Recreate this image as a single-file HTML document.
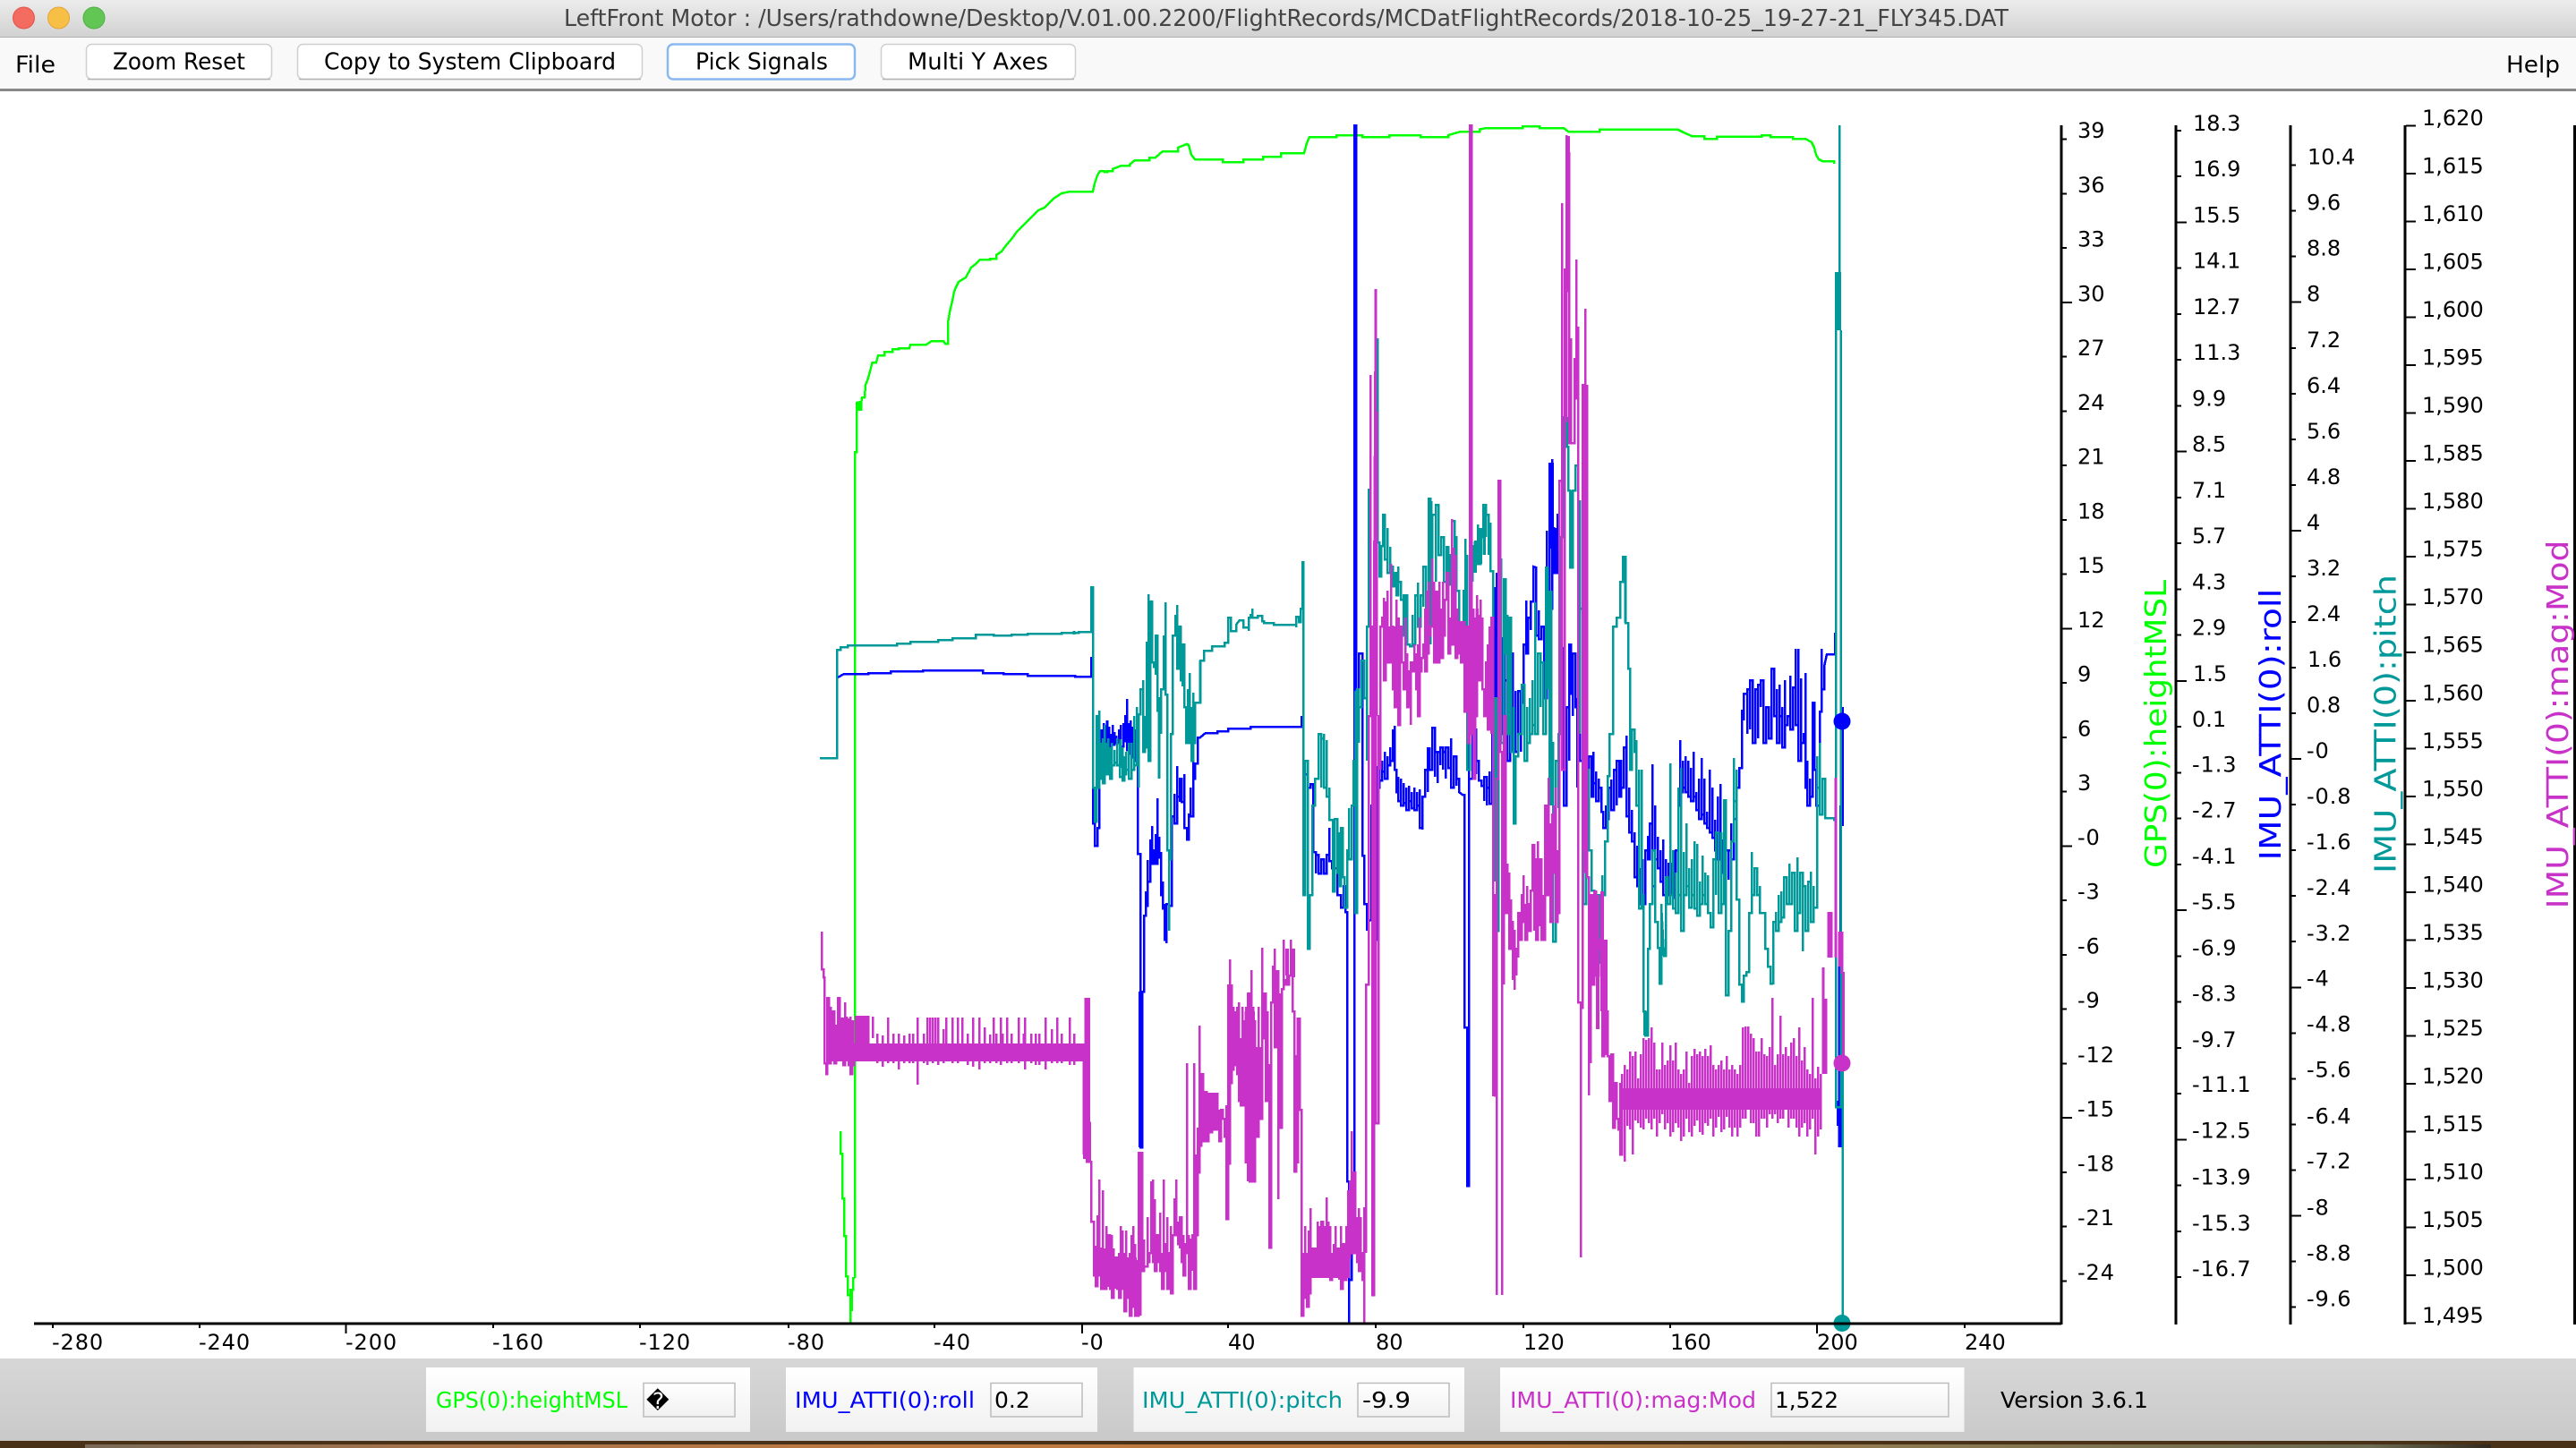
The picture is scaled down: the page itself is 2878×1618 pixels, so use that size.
<!DOCTYPE html>
<html><head><meta charset="utf-8"><title>LeftFront Motor</title>
<style>
html,body{margin:0;padding:0;background:#fff;width:2878px;height:1618px;overflow:hidden}
svg{display:block}
text{font-family:"DejaVu Sans","Liberation Sans",sans-serif}
.t{font-size:24px;fill:#000}
.n{letter-spacing:.9px}
.u{font-size:26px;fill:#000}
.p{font-size:25px}
.tr{fill:none;stroke-linejoin:miter;shape-rendering:crispEdges}
.ax{fill:none;stroke:#000;shape-rendering:crispEdges}
</style></head><body>
<svg width="2878" height="1618" viewBox="0 0 2878 1618" xmlns="http://www.w3.org/2000/svg">
<defs>
<linearGradient id="tb" x1="0" y1="0" x2="0" y2="1"><stop offset="0" stop-color="#ececec"/><stop offset="1" stop-color="#d2d2d2"/></linearGradient>
<linearGradient id="bp" x1="0" y1="0" x2="0" y2="1"><stop offset="0" stop-color="#d7d7d7"/><stop offset="1" stop-color="#c9c9c9"/></linearGradient>
<linearGradient id="wb" x1="0" y1="0" x2="0" y2="1"><stop offset="0" stop-color="#ffffff"/><stop offset="1" stop-color="#f1f1f1"/></linearGradient>
<linearGradient id="wp" x1="0" y1="0" x2="1" y2="0"><stop offset="0" stop-color="#7a6a58"/><stop offset=".15" stop-color="#a9744a"/><stop offset=".35" stop-color="#c07a40"/><stop offset=".6" stop-color="#b87a3e"/><stop offset=".75" stop-color="#8f7a50"/><stop offset=".95" stop-color="#6c6a50"/><stop offset="1" stop-color="#33291c"/></linearGradient>
</defs>
<rect width="2878" height="1618" fill="#fff"/>

<!-- title bar -->
<rect width="2878" height="41" fill="url(#tb)"/>
<rect y="41" width="2878" height="1" fill="#b0b0b0"/>
<circle cx="26.5" cy="20" r="12" fill="#f46b5f" stroke="#e2554a"/>
<circle cx="65.5" cy="20" r="12" fill="#f8bf47" stroke="#e2a533"/>
<circle cx="105" cy="20" r="12" fill="#61c654" stroke="#4fb043"/>
<text x="630" y="29" font-size="26" fill="#444" textLength="1614" lengthAdjust="spacingAndGlyphs">LeftFront Motor : /Users/rathdowne/Desktop/V.01.00.2200/FlightRecords/MCDatFlightRecords/2018-10-25_19-27-21_FLY345.DAT</text>

<!-- tool bar -->
<rect y="42" width="2878" height="57" fill="#f9f9f9"/>
<rect y="99" width="2878" height="3" fill="#888"/>
<text class="u" x="17" y="81" textLength="45" lengthAdjust="spacingAndGlyphs">File</text>
<text class="u" x="2800" y="81" textLength="60" lengthAdjust="spacingAndGlyphs">Help</text>
<g fill="#fff" stroke="#d0d0d0" stroke-width="1.5">
<rect x="96.5" y="49.5" width="207" height="39" rx="6"/>
<rect x="332.5" y="49.5" width="385" height="39" rx="6"/>
<rect x="984.5" y="49.5" width="217" height="39" rx="6"/>
</g>
<g fill="none" stroke="#b4b4b4" stroke-width="1.5">
<path d="M98 88.5H302M334 88.5H716M986 88.5H1200"/>
</g>
<rect x="746" y="49.5" width="209" height="39" rx="6" fill="#fff" stroke="#8ab9f2" stroke-width="2.5"/>
<text class="u" x="126" y="77.5" textLength="148" lengthAdjust="spacingAndGlyphs">Zoom Reset</text>
<text class="u" x="362" y="77.5" textLength="326" lengthAdjust="spacingAndGlyphs">Copy to System Clipboard</text>
<text class="u" x="777" y="77.5" textLength="148" lengthAdjust="spacingAndGlyphs">Pick Signals</text>
<text class="u" x="1014" y="77.5" textLength="157" lengthAdjust="spacingAndGlyphs">Multi Y Axes</text>

<!-- traces -->
<g class="tr" stroke="#00ff00" stroke-width="2.5">
<path d="M955 1428V505H957V450L962 449V459M957 452H962L963 444H966L967 430L969.5 424L972 415L974.5 405H979L981 397H988V393H997V390H1004V389H1016L1017 385H1035L1041 381H1054L1056 384H1059V361L1061 349L1064 336L1066 326L1068 321L1071 315L1079 310L1085 299L1090 295L1095 290H1106V289H1113V285L1119 281L1125 273L1131 266L1136 259L1148 247L1160 235L1167 232L1177 222L1186 216L1196 214H1221L1223 205L1226 196L1229 191H1234V192H1237V191H1243V189L1253 185H1262V184L1268 179H1284V176H1291L1299 169H1316V165L1326 161L1328 162L1331 173L1335 178H1366V181H1389V178H1411V175H1431V171H1457L1460 160L1463 153H1493V151H1522V153H1552V151H1587V153H1618V151L1625 149L1632 147H1653V144.500L1661 143H1701V141H1720V143H1747L1752 147H1787V144.500H1874L1881 148L1890 152H1904V155H1918V152.600H1968V151H1978V153H2003V155H2017L2024 159L2027 165L2029 173L2032 178L2036 180H2049V183"/>
<path d="M939 1264V1289H941V1339H943V1381H945V1426H947V1447H950V1478V1441H953V1428H955"/>
<path d="M951 1441V1465" stroke-width="4"/>
<path d="M959 450V459" stroke-width="6"/>
</g>

<g class="tr" stroke="#0000ff" stroke-width="2.5">
<path d="M936 757L943 753H970V752H995V750H1031V749H1098V752H1121V753H1148V755H1201V756H1219V734V756H1221V920H1223V934V945H1226V925H1228V849L1231 815V840H1233V808V835H1235V826L1237 805V832H1239V812V838H1241V820V830H1243V810V832H1245V818V830H1247V822V828H1250V815V830H1252V810V834H1255V808V828H1257V800H1259V781V838H1261V808V842H1263V805V840H1265V812V846H1267V808V848H1269V815V850H1271V876V954H1274V1282H1276V1108H1278V1023H1280V996V1012H1282V961V985H1285V938V965H1287V923V950H1289V965H1291V932V965H1293V892V950H1295V935V958H1297V952V1000H1299V985V1015H1301V1010V1050H1303V1054V1010H1306V1000V1012H1309V972V912H1312V887V920H1315V856V890H1318V896V870H1320V880V896H1323V865V925H1326V938H1328V910H1330V880V912H1333V838V870H1335V853H1338V824H1341L1347 819H1360V817H1372V814H1397V812H1454V800V811H1456V778V890H1458V865H1461V849V880H1464V876H1467V952H1470V976V955H1473V976H1476V960H1479V976H1482V955H1485V925V962H1488V970H1491V945V970H1494V965V1000H1498V1014H1501V990H1503V1019H1505V1320H1507V1478V1430H1510V1376H1513V140H1515V770H1518V730H1522V956H1524V1010H1527V1040L1530 1028H1532V900H1534V1040V760H1536V1050H1538V856V880H1541V842V872H1544V850V862H1547V840V870H1550V845V855H1553V835V850H1556V815V835H1558V811V860H1560V867V885H1562V868V895H1565V870V900H1568V875V897H1571V880V905H1574V878V895H1577V885V903H1580V880V905H1583V885V900H1586V882V925H1589V927V890H1592V860H1595V885V836H1597V860H1600V813H1603V868V840H1606V875V840H1609V855V835H1612V860V840H1615V870V835H1618V858H1621V825V880H1624V845H1627V878V870H1630V885L1634 888H1636V1148H1639V1325H1641V816V870H1645V815H1649V865V850H1652V872H1655V878H1658V895V868H1661V900V880H1664V862V898H1667V840V815H1670V656V910H1672V640V770H1675V730V780H1678V712V820H1681V711V760H1684V712V850H1687V730H1690V745V840H1693V772V840H1696V772H1699V840V785H1702V720H1705V671V730H1707V696V690H1710V704V672H1713V633L1716 634V710H1719V682V714H1722V700H1725V780H1728V593V740H1731V517V680H1734V513V590H1736V611V640H1738V595V640H1740V575H1742V800H1744V723V780H1747V723V900H1750V860V790H1753V850V720H1755V775H1757V800V730H1760V790H1762V880V781H1765V665V850H1768V800H1771V734H1773V880H1775V876V845L1778 845V890H1780V840V875H1783V862V895H1786V870V880H1789V907H1791V925H1794V900V915H1797V880H1800V871V905H1803V860H1806V900V850H1809V890H1811V849V880H1814V835H1817V822V912H1820V880V930H1823V905V940H1826V930V980H1829V945V990H1832V970V1010H1835V960V1010H1838V950V950H1841V934V960H1843V920H1846V854V990H1849V900V960H1852V935V970H1855V950V985H1858V938V1000H1861V960V1000H1864V992V965H1867V1000H1870V950V1003H1872V950H1875V900H1877V827V885H1880V850V880H1883V845V885H1886V850V890H1889V858V895H1892V840V890H1895V885V905H1898V870V915H1901V847V910H1904V870V920H1907V907V925H1910V860V930H1913V880V936H1916V916V950H1919V890V960H1922V876V950H1925V938V975H1928V950H1931V983V950H1934V920V960H1937V934V915H1940V880H1943V858H1946V800V794H1948V805V775H1952V820V770H1955V815V760H1958V800V830H1961V770H1964V825V765H1967V790V760H1970V830H1973V790H1976V795V825H1979V800V747H1982V800H1985V770V830H1988V765V800H1991V790V835H1994V760V810H1997V800H2000V755V815H2003V768H2006V725V810H2009V725V850H2012V758V830H2015V820H2017V752V880H2019V850V900H2022V870V890H2025V785H2027V800V860H2029V870V900H2033V795H2035V725V770H2038V745L2041 731H2050V708H2051V785"/>
<path d="M1514 178V756" stroke-width="3"/>
<path d="M1274 1108V1282" stroke-width="4.500"/>
<path d="M1640 1148V1325" stroke-width="3.500"/>
<path d="M1734 517V613M1738 590V612" stroke-width="4"/>
<path d="M2056 900V1282" />
<path d="M2054.500 1063V1282M2058.500 790V923" />
<path d="M2054 1230V1258" stroke-width="4"/>
</g>

<g class="tr" stroke="#009999" stroke-width="2.500">
<path d="M916 847H935V726H939V723H947V721H1002V719H1017V717H1048V715H1064V713H1090V709H1110V710H1130V709H1148V708H1186V707H1205V706H1219V656H1221V880H1223V918H1225V800H1226V880H1228V794V860H1230V830V870H1232V825V875H1234V810V860H1236V830V865H1238V825V862H1240V835V870H1242V830V855H1245V838V852H1248V825V855H1251V830V868H1254V835V872H1256V845V865H1258V840V860H1261V830V870H1264V830V860H1267V800V855H1270V790V850H1272V880V798H1274V770H1277V760V840H1279V800V835H1281V718H1283V664V850H1285V672H1287V676V740H1289V745H1291V754V710H1293V714V794H1295V870V780H1297V820V770H1300V711H1302V673V776H1304V950H1306V1040V960H1308V820H1310V710H1313V688H1315V676V747H1317V700H1319V727V760H1321V767V720H1323V734V790H1325V794V830H1327V770V830H1329V752V825H1331V790V850H1333V774V830H1335V785H1341V738H1345V727H1354V722H1368V718H1372V707V690H1375V705H1381V698L1385 693H1389V701H1395V705V690H1397V687H1399V680V690H1405V688H1410V694H1412V696H1423V698H1448V701V689H1451V695H1453V680H1455V628H1456V800V1000H1458V960V850H1461V890V1060H1463V1059V1000H1466V992V900H1469V870H1473V820H1476V880V825H1479V820V880H1482V827V890H1485V880V916H1489V996H1491V915H1494V975H1496V930V990H1498V925H1500V980H1502V1014H1505V950H1507V903V960H1510V952V900H1512V850H1514V772V1020H1516V900V770H1518V830V790H1521V738H1524V780H1527V850V700H1529V546V600H1531V644V800H1533V709H1537V379H1539V606H1541V644H1543V610H1545V575H1547V625H1550V590V640H1553V611V633H1556V655H1558V653V640H1560V665H1562V633V650H1565V670H1568V664V710H1570V698V665H1572V720H1575V722H1578V687V720H1581V665H1584V651V700H1587V665H1590V678V633H1593V690H1596V557H1598V600H1600V624V575H1604V650V564H1607V620H1610V600H1613V611V650H1616V611H1618V653H1620V620H1622V582H1625V656V600H1627V660H1630V700H1632V705H1635V660H1637V602V700H1639V620V860H1642V630H1645V650V610H1648V625V605H1651V586V630H1654V590V600H1657V564H1660V600V575H1663V620V585H1665V638H1668V820H1670V985V780H1672V1040H1674V830V625H1677V760V830H1680V690V647H1682V730H1684V687V820H1686V690H1688V840H1691V790V920H1693V860V845H1696V820H1700V765H1703V800V850H1706V790V830H1709V780V820H1712V760V810H1715V673V820H1718V730H1721V790V740H1724V800V820H1727V633V700H1730V660V720H1733V660V830H1735V840V1052H1738V850H1741V903V820H1744V660V600H1747V466H1750V499H1752V548H1754V634H1757V548H1760V520H1763V560H1765V820V680H1769V700V1010H1772V740V860H1775V950H1778V960V995H1781V1060H1784V1000H1787V1077V1020H1790V978V1000H1793V940H1796V867H1798V860V820H1802V813V700H1806V690H1810V650H1813V622H1816V696H1819V747H1821V800V860H1823V815H1826V840H1828V827V900H1831V860V1015H1834V860V1000H1836V1130H1838V1157H1841V1060H1843V1010H1846V950H1849V1030H1852V1059H1854V1099H1856V1010L1859 1068H1861V1019V980H1863V1010H1866V853V1000H1869V950V1015H1872V975V1020H1875V880V1000H1878V858V1040H1881V952V1000H1884V920V990H1887V970V1014H1890V960V1000H1893V940V1015H1896V943V1023H1899V985V1010H1902V956V1000H1905V975V1010H1908V978V1020H1911V1036H1914V1020V960H1917V1000V930H1920V1020H1923V930V1010H1926V894H1928V1112H1931V1040H1934V940H1937V847V895H1940V860V1005H1943V1040V1100H1946V1119H1948V1090H1951V1086H1954V1020H1957V952V1000H1960V970H1963V978V1000H1966V990V1020H1969V1020H1972V1060H1975V1068V1080H1978V1099H1981V1100V1030H1984V1019V1040H1987V1000V1030H1990V996V1025H1993V1000V980H1996V1010H1999V965V1010H2002V1000V975H2005V1040H2008V958V1020H2011V975H2014V1063V990H2017V1040H2020V985H2023V974V1030H2026V990V1014H2030V845V880H2033V830V910H2036V870H2039V914H2049V916H2051V304V1237H2056.500V369V1188H2058.500V1478"/>
<path d="M2054 304V369" stroke-width="6"/>
<path d="M2055 140V310"/>
<path d="M1537 379V460" stroke-width="3"/>
<path d="M1530 546V640" stroke-width="3.500"/>
<path d="M1728 633V770M1732 660V900" stroke-width="4.500"/>
<path d="M1838 1130V1157M1750 466V500M1755 548V634" stroke-width="4"/>
<path d="M2058.500 1188V1478" stroke-width="2.500"/>
<path d="M1816 622V696" stroke-width="3"/>
<path d="M1599 560V620M1598 610V720" stroke-width="3"/>
<path d="M1658 566V620M1654 590V630M1648 605V640" stroke-width="3.500"/>
<path d="M1252 826V858M1237 845V860M1200 705V709M1295 795V870M1341 738V785" stroke-width="3"/>
</g>

<!-- magenta: bands + zigzags -->
<g fill="#c832c8" shape-rendering="crispEdges">
<rect x="925" y="1166" width="287" height="20"/>
<rect x="1234" y="1405" width="36" height="24"/>
<rect x="1460" y="1400" width="48" height="28"/>
<rect x="1812" y="1216" width="222" height="24"/>
</g>
<g class="tr" stroke="#c832c8" stroke-width="2.500">
<path d="M918 1041V1083H920V1092H921V1188H923V1200H924V1115H926V1188H928V1125V1180H930V1130H932V1188H934V1145V1180H936V1140V1115H938V1175H940V1138H942V1190H944V1120V1170H946V1136V1180H948V1190H950V1136V1200H952V1145V1190H954V1180H956V1165V1136H958V1175H960V1136H962V1178H964V1136H966V1178H968V1136H970V1168"/>
<path d="M975 1136V1160M980 1155V1188M986 1157V1192M992 1137V1188M998 1155V1188M1004 1155V1195M1010 1157V1188M1016 1155V1188M1020 1155V1188M1025 1137V1212M1032 1155V1188M1036 1137V1190M1039 1137V1175M1042 1137V1188M1045 1137V1175M1048 1137V1190M1054 1150V1188M1057 1137V1185M1064 1137V1188M1070 1137V1188M1075 1137V1175M1081 1155V1190M1087 1137V1192M1094 1137V1195M1100 1148V1188M1106 1156V1188M1110 1137V1185M1113 1155V1188M1118 1137V1190M1125 1137V1188M1130 1155V1188M1138 1137V1188M1145 1137V1195M1152 1155V1188M1157 1155V1190M1161 1155V1190M1168 1137V1195M1175 1150V1188M1181 1137V1188M1186 1155V1188M1195 1137V1190M1200 1155V1190"/>
<path d="M948 1138V1170M953 1140V1170M958 1140V1165M962 1138V1165M966 1138V1165M1144 1155V1175M1120 1155V1170" stroke-width="3"/>
<path d="M1213 1115V1255M1216 1115V1255H1217V1298M1211 1290V1180" stroke-width="3.500"/>
<path d="M1214 1255V1298H1219V1365H1222V1425H1224V1392V1437H1226V1358V1425H1228V1318V1395H1230V1440H1232V1330V1420H1234V1395V1440H1236V1370V1420H1238V1438V1380H1240V1440H1242V1380V1450H1244V1395V1420H1246V1440V1405H1248V1440H1250V1400V1450H1252V1370V1440H1254V1375V1420H1256V1400V1465H1258V1375V1440H1260V1405V1450H1262V1400V1470H1264V1380V1460H1266V1370V1445H1268V1390V1470H1270V1408V1470H1272V1287V1420H1274V1470V1288H1276V1420H1278V1385V1415H1280V1415H1282V1360V1410H1284V1400H1286V1320V1390H1288V1318V1410H1290V1340V1420H1292V1400V1380H1294V1410H1296V1355V1420H1298V1400V1440H1300V1318V1390H1302V1420H1304V1360V1440H1306V1400H1308V1370V1445H1310V1380H1312V1360V1340H1314V1318V1380H1316V1365V1390H1318V1395V1360H1320V1395V1410H1322V1380V1425H1324V1390H1326V1188V1400H1328V1425V1380V1440H1330V1385H1332V1420V1380H1334V1188V1440H1336V1290V1380H1338V1260V1310H1340V1146V1280H1342V1200H1344V1250V1275H1346V1220H1348V1252V1275H1350V1222H1352V1265H1354V1222H1356V1262H1358V1222H1360V1262H1362V1240V1275H1364V1240H1366V1250H1368V1270H1370V1235V1362H1372V1100V1300H1374V1072V1210H1376V1100V1195H1378V1125V1185H1380V1130V1190H1382V1125V1200H1384V1120V1230H1386V1160V1235H1388V1125V1235H1390V1140V1225H1392V1125V1190H1394V1320V1110H1396V1320H1398V1084V1220H1400V1125V1320H1402V1140V1250H1404V1170V1270H1406V1125V1240H1408V1170V1250H1410V1059V1160H1412V1110H1414V1230H1416V1130V1190H1418V1200V1394H1420V1260V1120H1422V1080H1424V1060V1170H1426V1085H1428V1340V1190H1430V1110V1260H1432V1105H1434V1050V1100H1436V1095H1438V1085V1100H1440V1090H1442V1050V1090H1444V1090V1130H1446V1309H1448V1250V1180H1450V1240V1138H1452V1137V1240H1454V1340V1470H1456V1400V1450H1458V1370V1445H1460V1400V1460H1462V1375V1445H1464V1350V1420H1466V1395H1468V1420H1470V1395H1472V1365V1420H1474V1370V1395H1476V1405V1365H1478V1420H1480V1370V1420H1482V1338V1420H1484V1365V1420H1486V1370V1430H1488V1410H1490V1390V1415H1492V1370V1420H1494V1395H1496V1430V1395H1498V1370V1440H1500V1390H1502V1430H1504V1370V1425H1506V1330V1405H1508V1395V1320H1510V1264V1400H1512V1310H1514V1340V1400H1516V1360V1410H1518V1350V1420H1520V1360V1400H1522V1400V1430H1524V1478V1350H1526V1400V1100H1529V800H1531V419V700H1533V1447H1535V700L1537 323V1255H1540V800H1542V860V700H1544V690H1546V668V760H1548V672V740H1550V660V735H1552V700V740H1554V630V700H1556V770H1558V700V790H1560V670V780H1562V700V810H1564V700H1566V740H1568V770H1570V690V740H1572V730V790H1574V750H1576V810V740H1578V750H1580V720V750H1582V730V770H1584V720V800H1586V690V750H1588V735H1590V720H1592V680V750H1594V660V730H1596V650V710H1598V700H1600V624V660H1602V650V740H1604V660V700H1606V660V740H1608V650V700H1610V680V735H1612V650V710H1614V670H1616V640H1618V660V730H1620V690V700H1622V580V720H1624V612V700H1626V620V735H1628V680V730H1630V695H1632V740H1634V740V695H1636V795H1638V700H1640V720V830H1642V680V140H1644V820H1646V680V870H1648V690V800H1650V665V750H1652V687V760H1654V670V730H1656V690V770H1658V800H1660V790V740H1662V720V815H1664V700V810H1666V820V690H1668V1225V1000H1670V1224H1672V1447V870H1674V660V537H1676V840H1678V1447V1000H1680V1100V800H1682V1020H1684V965V1000H1686V975V1060H1688V1005V1030H1690V1095V1040H1692V1106V1065H1694V1090V1060H1696V1070V1020H1698V1050H1700V1000H1702V978V1030H1704V1010V1050H1706V990V1010H1708V1040H1710V1040V995H1712V944H1714V1040V960H1716V985V1050H1718V940V1020H1720V1035V960H1722V1050H1724V1000V1050H1726V920V900H1728V1000H1730V869V960H1732V920V1030H1734V910H1736V900V975H1738V880V1030H1740V950V1020H1742V537H1745V227V860H1748V300V470H1750V151V325H1753V170V495H1755V378V495H1759V400V440H1761V290V445H1763V365V1120H1766V1405V1126H1768V430H1771V345V974H1773V430V980H1775V1224V1090H1777V1188V1000H1779V1100H1781V996H1783V1090H1786V1060H1788V1050H1790V996V1180H1792V1050V1100H1794V1179V1130H1796V1180H1798V1180V1230H1800V1178H1802V1260H1804V1220V1210H1806V1250H1808V1262H1810V1210V1290H1812V1200V1262"/>
<path d="M1815 1190V1298M1818 1195V1258M1821 1175V1262M1824 1180V1290M1827 1175V1252M1830 1205V1255M1833 1178V1260M1836 1160V1262M1839 1162V1250M1842 1160V1255M1845 1148V1262M1848 1165V1250M1851 1195V1270M1854 1195V1255M1857 1165V1245M1860 1190V1262M1863 1185V1255M1866 1168V1270M1869 1185V1265M1872 1165V1255M1875 1195V1260M1878 1200V1275M1881 1195V1270M1884 1175V1250M1887 1210V1265M1890 1180V1270M1893 1172V1258M1896 1178V1252M1899 1175V1265M1902 1180V1268M1905 1172V1255M1908 1180V1258M1911 1168V1250M1914 1190V1270M1917 1195V1260M1920 1190V1248M1923 1185V1265M1926 1195V1262M1929 1180V1248M1932 1195V1260M1935 1190V1270M1938 1195V1260M1941 1200V1270M1944 1190V1260M1947 1148V1250M1950 1147V1250M1953 1147V1240M1956 1155V1255M1959 1160V1255M1962 1175V1270M1965 1175V1270M1968 1160V1250M1971 1178V1250M1974 1180V1260M1977 1170V1245M1980 1115V1250M1983 1190V1245M1986 1178V1255M1989 1135V1250M1992 1178V1250M1995 1170V1240M1998 1180V1260M2001 1165V1250M2004 1160V1250M2007 1180V1260M2010 1148V1270M2013 1185V1260M2016 1170V1255M2019 1195V1270M2022 1200V1262M2025 1115V1250M2028 1205V1290M2031 1192V1270M2034 1200V1262"/>
<path d="M2037 1200V1081M2040 1116V1200M2043 1019V1070M2046 1019V1070M2051 869V1070M2055 1041V1080M2058 1041V1088M2059.500 1086V1185" stroke-width="3"/>
<path d="M1644 170V690" stroke-width="3"/>
<path d="M1752 152V325" stroke-width="3.500"/>
<path d="M1538 460V800" stroke-width="3"/>
<path d="M1770 430V950" stroke-width="3.500"/>
<path d="M1785 1000V1150M1790 996V1130M1794 1050V1160" stroke-width="4"/>
<path d="M1212 1180V1295" stroke-width="4"/>
<path d="M1276 1288V1410" stroke-width="3"/>
<path d="M1392 1130V1300M1396 1130V1320M1400 1130V1320" stroke-width="3.500"/>
<path d="M1445 1060V1092M1438 1060V1090" stroke-width="4"/>
<path d="M1450 1137V1300" stroke-width="3"/>
<path d="M1562 690V770M1604 660V720M1650 680V730" stroke-width="3.500"/>
</g>

<!-- end-of-line dots -->
<circle cx="2058" cy="806" r="9.500" fill="#0000ff"/>
<circle cx="2058" cy="1188" r="9.500" fill="#c832c8"/>
<circle cx="2058" cy="1478.500" r="9.500" fill="#009999"/>

<!-- x axis -->
<path class="ax" stroke-width="3" d="M38 1479H2303"/>
<path class="ax" stroke-width="2" d="M59 1480V1484M223 1480V1484M386.500 1480V1490M551 1480V1484M715 1480V1484M881 1480V1484M1044 1480V1484M1209 1480V1490M1372 1480V1484M1537 1480V1484M1702 1480V1484M1866 1480V1484M2030 1480V1490M2195 1480V1484"/>
<g class="t">
<text class="n" x="58" y="1508">-280</text><text class="n" x="222" y="1508">-240</text><text class="n" x="386" y="1508">-200</text><text class="n" x="550" y="1508">-160</text><text class="n" x="714" y="1508">-120</text><text class="n" x="880" y="1508">-80</text><text class="n" x="1043" y="1508">-40</text><text class="n" x="1208" y="1508">-0</text><text x="1372" y="1508">40</text><text x="1537" y="1508">80</text><text x="1702" y="1508">120</text><text x="1866" y="1508">160</text><text x="2030" y="1508">200</text><text x="2195" y="1508">240</text>
</g>

<!-- y axes -->
<path class="ax" stroke-width="3" d="M2303 140V1480M2431 140V1480M2559 140V1480M2687 140V1480M2876.500 140V1480"/>
<path class="ax" stroke-width="2" d="M2304 155.500h5M2304 216.300h5M2304 277h5M2304 337.800h11M2304 398.500h5M2304 459.300h5M2304 520h5M2304 580.800h5M2304 641.500h5M2304 702.300h11M2304 763h5M2304 823.800h5M2304 884.500h5M2304 945.300h11M2304 1006h5M2304 1066.800h5M2304 1127.500h5M2304 1188.300h5M2304 1249h11M2304 1309.800h5M2304 1370.500h5M2304 1431.300h5"/>
<path class="ax" stroke-width="2" d="M2432 146h5M2432 197.200h5M2432 248.500h11M2432 299.700h5M2432 350.900h5M2432 402.200h5M2432 453.400h5M2432 504.700h11M2432 555.900h5M2432 607.200h5M2432 658.400h5M2432 709.600h5M2432 760.900h11M2432 812.100h5M2432 863.400h5M2432 914.600h5M2432 965.800h5M2432 1017.100h11M2432 1068.300h5M2432 1119.600h5M2432 1170.800h5M2432 1222h5M2432 1273.300h11M2432 1324.500h5M2432 1375.800h5M2432 1427h5"/>
<path class="ax" stroke-width="2" d="M2560 184.600h5M2560 235.600h5M2560 286.700h5M2560 337.700h11M2560 388.800h5M2560 439.800h5M2560 490.800h5M2560 541.900h5M2560 592.900h11M2560 643.900h5M2560 695h5M2560 746h5M2560 797h5M2560 848.100h11M2560 899.100h5M2560 950.200h5M2560 1001.200h5M2560 1052.200h5M2560 1103.300h11M2560 1154.300h5M2560 1205.400h5M2560 1256.400h5M2560 1307.400h5M2560 1358.500h11M2560 1409.500h5M2560 1460.600h5"/>
<path class="ax" stroke-width="2" d="M2688 140.400h11M2688 193.900h11M2688 247.500h11M2688 301h11M2688 354.500h11M2688 408.100h11M2688 461.600h11M2688 515.100h11M2688 568.600h11M2688 622.200h11M2688 675.700h11M2688 729.200h11M2688 782.800h11M2688 836.300h11M2688 889.800h11M2688 943.400h11M2688 996.900h11M2688 1050.400h11M2688 1103.900h11M2688 1157.500h11M2688 1211h11M2688 1264.500h11M2688 1318.100h11M2688 1371.600h11M2688 1425.100h11M2688 1478.700h11"/>

<g class="t">
<text x="2321" y="154">39</text><text x="2321" y="215">36</text><text x="2321" y="275.500">33</text><text x="2321" y="336.300">30</text><text x="2321" y="397">27</text><text x="2321" y="457.800">24</text><text x="2321" y="518.500">21</text><text x="2321" y="579.300">18</text><text x="2321" y="640">15</text><text x="2321" y="700.800">12</text><text x="2321" y="761.500">9</text><text x="2321" y="822.300">6</text><text x="2321" y="883">3</text><text class="n" x="2321" y="943.800">-0</text><text class="n" x="2321" y="1004.500">-3</text><text class="n" x="2321" y="1065.300">-6</text><text class="n" x="2321" y="1126">-9</text><text class="n" x="2321" y="1186.800">-12</text><text class="n" x="2321" y="1247.500">-15</text><text class="n" x="2321" y="1308.300">-18</text><text class="n" x="2321" y="1369">-21</text><text class="n" x="2321" y="1429.800">-24</text>

<text x="2450" y="146">18.3</text><text x="2450" y="197.200">16.9</text><text x="2450" y="248.500">15.5</text><text x="2450" y="299.700">14.1</text><text x="2450" y="350.900">12.7</text><text x="2450" y="402.200">11.3</text><text x="2449" y="453.400">9.9</text><text x="2449" y="504.700">8.5</text><text x="2449" y="555.900">7.1</text><text x="2449" y="607.200">5.7</text><text x="2449" y="658.400">4.3</text><text x="2449" y="709.600">2.9</text><text x="2450" y="760.900">1.5</text><text x="2449" y="812.100">0.1</text><text class="n" x="2449" y="862.400">-1.3</text><text class="n" x="2449" y="913.600">-2.7</text><text class="n" x="2449" y="964.800">-4.1</text><text class="n" x="2449" y="1016.100">-5.5</text><text class="n" x="2449" y="1067.300">-6.9</text><text class="n" x="2449" y="1118.600">-8.3</text><text class="n" x="2449" y="1169.800">-9.7</text><text class="n" x="2449" y="1220">-11.1</text><text class="n" x="2449" y="1271.300">-12.5</text><text class="n" x="2449" y="1323.500">-13.9</text><text class="n" x="2449" y="1374.800">-15.3</text><text class="n" x="2449" y="1426">-16.7</text>

<text x="2578" y="183.600">10.4</text><text x="2577" y="234.600">9.6</text><text x="2577" y="285.700">8.8</text><text x="2577" y="336.700">8</text><text x="2577" y="387.800">7.2</text><text x="2577" y="438.800">6.4</text><text x="2577" y="489.800">5.6</text><text x="2577" y="540.900">4.8</text><text x="2577" y="591.900">4</text><text x="2577" y="642.900">3.2</text><text x="2577" y="694">2.4</text><text x="2578" y="745">1.6</text><text x="2577" y="796">0.8</text><text class="n" x="2577" y="847.100">-0</text><text class="n" x="2577" y="898.100">-0.8</text><text class="n" x="2577" y="949.200">-1.6</text><text class="n" x="2577" y="1000.200">-2.4</text><text class="n" x="2577" y="1051.200">-3.2</text><text class="n" x="2577" y="1101.300">-4</text><text class="n" x="2577" y="1152.300">-4.8</text><text class="n" x="2577" y="1203.400">-5.6</text><text class="n" x="2577" y="1255.400">-6.4</text><text class="n" x="2577" y="1305.400">-7.2</text><text class="n" x="2577" y="1357.500">-8</text><text class="n" x="2577" y="1408.500">-8.8</text><text class="n" x="2577" y="1459.600">-9.6</text>
</g>
<g class="t" transform="translate(0 1)">
<text x="2706" y="139">1,620</text><text x="2706" y="192.500">1,615</text><text x="2706" y="246">1,610</text><text x="2706" y="299.500">1,605</text><text x="2706" y="353">1,600</text><text x="2706" y="406.600">1,595</text><text x="2706" y="460">1,590</text><text x="2706" y="513.600">1,585</text><text x="2706" y="567">1,580</text><text x="2706" y="620.700">1,575</text><text x="2706" y="674.200">1,570</text><text x="2706" y="727.700">1,565</text><text x="2706" y="781.300">1,560</text><text x="2706" y="834.800">1,555</text><text x="2706" y="888.300">1,550</text><text x="2706" y="941.900">1,545</text><text x="2706" y="995.400">1,540</text><text x="2706" y="1048.900">1,535</text><text x="2706" y="1102.400">1,530</text><text x="2706" y="1156">1,525</text><text x="2706" y="1209.500">1,520</text><text x="2706" y="1263">1,515</text><text x="2706" y="1316.600">1,510</text><text x="2706" y="1370.100">1,505</text><text x="2706" y="1423.600">1,500</text><text x="2706" y="1477.200">1,495</text>
</g>

<!-- rotated axis names -->
<text transform="translate(2420 970) rotate(-90)" font-size="33" fill="#00ff00" textLength="322" lengthAdjust="spacingAndGlyphs">GPS(0):heightMSL</text>
<text transform="translate(2548 961.500) rotate(-90)" font-size="33" fill="#0000ff" textLength="304" lengthAdjust="spacingAndGlyphs">IMU_ATTI(0):roll</text>
<text transform="translate(2676.500 976) rotate(-90)" font-size="33" fill="#009999" textLength="334" lengthAdjust="spacingAndGlyphs">IMU_ATTI(0):pitch</text>
<text transform="translate(2869 1015.500) rotate(-90)" font-size="33" fill="#c832c8" textLength="412" lengthAdjust="spacingAndGlyphs">IMU_ATTI(0):mag:Mod</text>

<!-- bottom panel -->
<rect y="1518" width="2878" height="92" fill="url(#bp)"/>
<rect x="476" y="1528" width="362" height="72" fill="url(#wb)"/>
<rect x="878" y="1528" width="348" height="72" fill="url(#wb)"/>
<rect x="1266.500" y="1528" width="369.500" height="72" fill="url(#wb)"/>
<rect x="1676" y="1528" width="518.500" height="72" fill="url(#wb)"/>
<g fill="url(#wb)" stroke="#bcbcbc" stroke-width="1.500">
<rect x="719" y="1545.500" width="102" height="37.500"/>
<rect x="1107" y="1545.500" width="102" height="37.500"/>
<rect x="1517" y="1545.500" width="102" height="37.500"/>
<rect x="1979" y="1545.500" width="198" height="37.500"/>
</g>
<text class="p" x="487" y="1573" fill="#00ff00" textLength="214" lengthAdjust="spacingAndGlyphs">GPS(0):heightMSL</text>
<text class="p" x="888" y="1573" fill="#0000ff" textLength="201" lengthAdjust="spacingAndGlyphs">IMU_ATTI(0):roll</text>
<text class="p" x="1276" y="1573" fill="#009999" textLength="224" lengthAdjust="spacingAndGlyphs">IMU_ATTI(0):pitch</text>
<text class="p" x="1687" y="1573" fill="#c832c8" textLength="275" lengthAdjust="spacingAndGlyphs">IMU_ATTI(0):mag:Mod</text>
<text x="722" y="1574" font-size="25" fill="#000">&#xFFFD;</text>
<text x="1111" y="1573" font-size="25" fill="#000">0.2</text>
<text x="1522" y="1573" font-size="25" fill="#000" textLength="54" lengthAdjust="spacingAndGlyphs">-9.9</text>
<text x="1983" y="1573" font-size="25" fill="#000" textLength="71" lengthAdjust="spacingAndGlyphs">1,522</text>
<text x="2235" y="1573" font-size="25" fill="#000" textLength="165" lengthAdjust="spacingAndGlyphs">Version 3.6.1</text>

<!-- desktop wallpaper strip -->
<rect y="1610" width="2878" height="8" fill="#4a3218"/>
<rect x="95" y="1614" width="2688" height="4" fill="url(#wp)"/>
</svg>
</body></html>
